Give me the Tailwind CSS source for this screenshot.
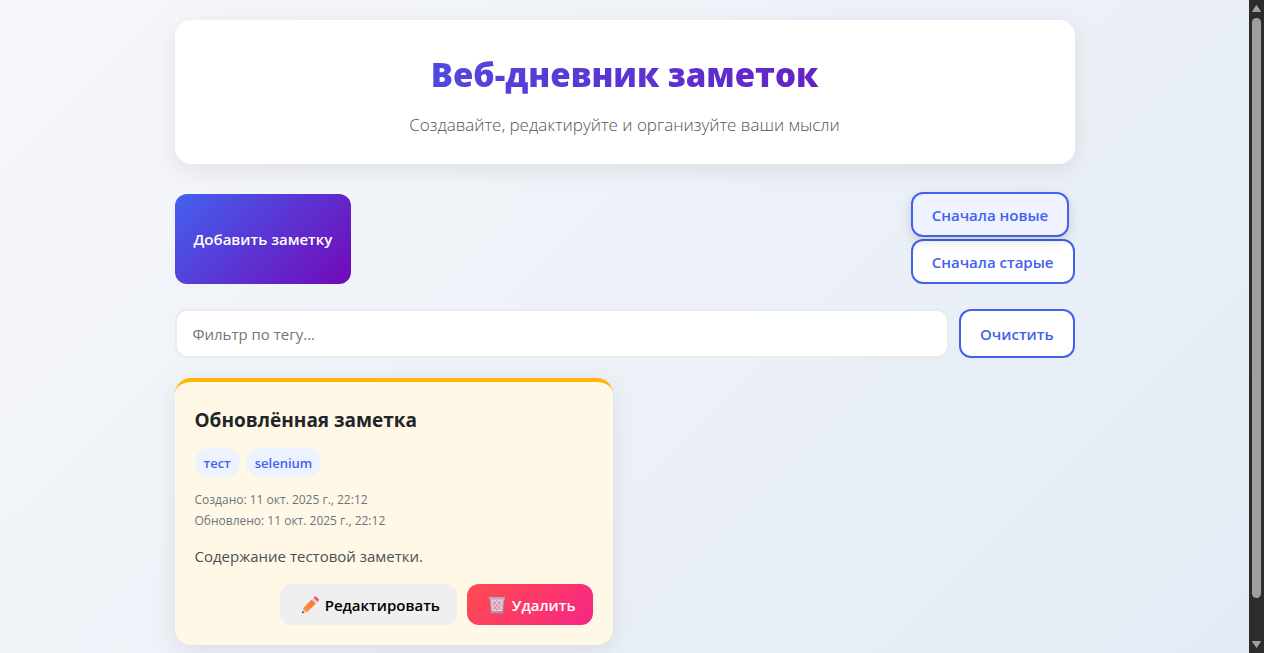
<!DOCTYPE html>
<html lang="ru">
<head>
<meta charset="utf-8">
<meta name="viewport" content="width=device-width, initial-scale=1">
<title>Веб-дневник заметок</title>
<script src="https://cdn.jsdelivr.net/npm/@tailwindcss/browser@4"></script>
</head>
<body class="flex h-screen overflow-hidden font-['Open_Sans','Noto_Sans',sans-serif] text-[15px] leading-6 text-[#212529]">
  <div class="min-w-0 flex-1 overflow-hidden bg-linear-135/srgb from-[#f6f7fb] via-[#edf1f7] to-[#e3ecf5]">
    <div class="mx-auto max-w-[940px] p-5">
      <header class="rounded-2xl bg-white px-8 pt-7 pb-6 text-center shadow-[0_6px_24px_rgba(0,0,0,0.08)]">
        <h1 class="bg-linear-135/srgb from-[#4361ee] to-[#7209b7] bg-clip-text text-[33px] leading-[54px] font-extrabold text-transparent">Веб-дневник заметок</h1>
        <p class="mt-2 text-[17px] leading-[30px] font-light text-[#4d565e]">Создавайте, редактируйте и организуйте ваши мысли</p>
      </header>

      <div class="mt-[30px] flex justify-between">
        <button type="button" class="rounded-xl bg-linear-135/srgb from-[#4361ee] to-[#7209b7] px-[19px] font-semibold text-white">Добавить заметку</button>
        <div class="flex flex-col items-start">
          <button type="button" class="z-10 h-[45px] -translate-y-0.5 rounded-xl border-2 border-[#4361ee] bg-[#eff3ff] px-[19px] font-semibold text-[#4361ee] shadow-[0_4px_12px_rgba(0,0,0,0.15)]">Сначала новые</button>
          <button type="button" class="h-[45px] rounded-xl border-2 border-[#4361ee] bg-white px-[19px] font-semibold text-[#4361ee]">Сначала старые</button>
        </div>
      </div>

      <form class="mt-[25px] flex gap-2.5">
        <input type="text" aria-label="Фильтр по тегу" placeholder="Фильтр по тегу..." class="h-[49px] min-w-0 flex-1 rounded-xl border-2 border-[#e9ecef] bg-white px-4 placeholder:text-[#757575]">
        <button type="button" class="rounded-xl border-2 border-[#4361ee] bg-white px-[19px] font-semibold text-[#4361ee]">Очистить</button>
      </form>

      <main class="mt-5 grid grid-cols-2 gap-6">
        <article class="rounded-2xl border-t-4 border-[#ffb703] bg-[#fff8e6] p-5 shadow-[0_6px_24px_rgba(0,0,0,0.08)]">
          <h2 class="text-[19px] leading-9 font-bold">Обновлённая заметка</h2>
          <ul class="mt-2.5 flex gap-1.5 text-[13px] leading-5 font-semibold text-[#4361ee]">
            <li class="rounded-full bg-[#edf2ff] px-[9px] pt-[5px] pb-1">тест</li>
            <li class="rounded-full bg-[#edf2ff] px-[9px] pt-[5px] pb-1">selenium</li>
          </ul>
          <div class="mt-3 text-xs leading-[21px] text-[#6c757d]">
            <p>Создано: 11 окт. 2025 г., 22:12</p>
            <p>Обновлено: 11 окт. 2025 г., 22:12</p>
          </div>
          <p class="mt-[13px] text-[#495057]">Содержание тестовой заметки.</p>
          <div class="mt-4 flex justify-end gap-2.5 font-semibold">
            <button type="button" class="flex h-[41px] items-center gap-[5px] rounded-xl bg-[#efefef] pr-[17px] pl-5 text-black">
              <svg class="size-5" viewBox="0 0 20 20" aria-hidden="true">
                <defs><linearGradient id="pencil" x1="0" y1="1" x2="1" y2="0"><stop offset="0" stop-color="#ff9a3c"/><stop offset="1" stop-color="#ff6a35"/></linearGradient></defs>
                <path d="M2 18.3 3.2 13 7.3 17Z" fill="#f6c9a8"/>
                <path d="M2 18.3 2.6 15.8 4.5 17.7Z" fill="#4b3a52"/>
                <path d="M3.2 13 11.7 4.5 15.8 8.6 7.3 17 5.5 16.8 5 15.2 3.4 14.8Z" fill="url(#pencil)"/>
                <path d="m11.7 4.5 1.9-1.9 4.1 4.1-1.9 1.9Z" fill="#dcd3e6"/>
                <path d="m13.6 2.6.8-.8a1.3 1.3 0 0 1 1.8 0l2.3 2.3a1.3 1.3 0 0 1 0 1.8l-.8.8Z" fill="#f9504f"/>
              </svg>
              Редактировать
            </button>
            <button type="button" class="flex h-[41px] items-center gap-[5px] rounded-xl bg-linear-135/srgb from-[#ff4d4d] to-[#f72585] pr-[17px] pl-5 text-white">
              <svg class="size-5" viewBox="0 0 20 20" aria-hidden="true">
                <path d="M3.500 4h13l-1 13.500h-11Z" fill="#e3d3df"/>
                <path d="m6 6 8 9M10 5.500l4 4M6 10l4 5M14 6l-8 9M10 5.500l-4 4M14 10l-4 5" fill="none" stroke="#ee5a80" stroke-width=".8"/>
                <path d="m3.500 4 1 13.500h11l1-13.500" fill="none" stroke="#aea3b0" stroke-width="1.400"/>
                <rect x="2" y="2" width="16" height="2.500" rx=".7" fill="#b5acb8"/>
                <rect x="4" y="16" width="12" height="2" rx=".6" fill="#a49ba8"/>
              </svg>
              Удалить
            </button>
          </div>
        </article>
      </main>
    </div>
  </div>

  <div class="flex w-[15px] shrink-0 flex-col items-center bg-[#2c2c2c] py-1" aria-hidden="true">
    <svg class="h-3 w-[9px] shrink-0" viewBox="0 0 9 12"><path d="M4.500 1.500 8.500 7.500H.5Z" fill="#9f9f9f" stroke="#9f9f9f" stroke-linejoin="round"/></svg>
    <div class="mt-0.5 h-[580px] w-[9px] rounded-full bg-[#9f9f9f]"></div>
    <svg class="mt-auto h-3 w-[9px] shrink-0" viewBox="0 0 9 12"><path d="M4.500 10.500.5 4.500h8Z" fill="#9f9f9f" stroke="#9f9f9f" stroke-linejoin="round"/></svg>
  </div>
</body>
</html>
